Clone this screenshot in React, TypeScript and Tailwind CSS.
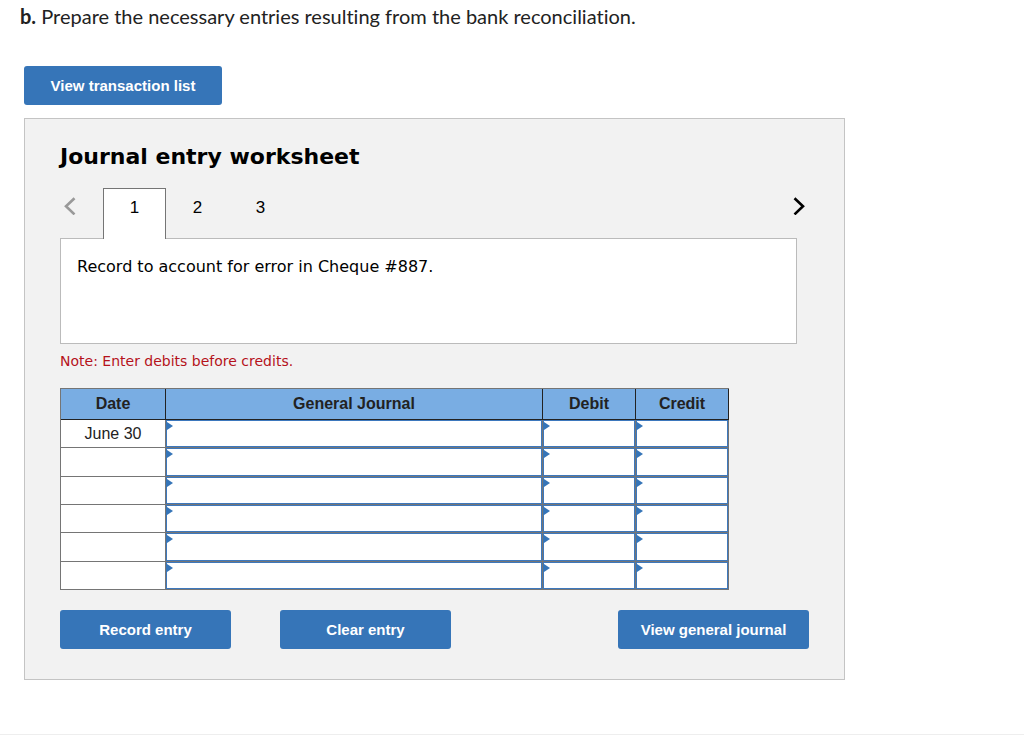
import { useState } from 'react';
import clsx from 'clsx';

const TABS = ['1', '2', '3'];
const ROWS = ['June 30', '', '', '', '', ''];
const COLUMNS = ['General Journal', 'Debit', 'Credit'];

interface ActionButtonProps {
  label: string;
  className?: string;
}

function ActionButton({ label, className }: ActionButtonProps) {
  return (
    <button
      type="button"
      className={clsx(
        'h-[39px] rounded-[3px] bg-[#3675b8] pt-px text-[15px] font-bold text-white hover:bg-[#2b639f]',
        className,
      )}
    >
      {label}
    </button>
  );
}

function Chevron({ flipped = false }: { flipped?: boolean }) {
  return (
    <svg width="12" height="18" viewBox="0 0 12 18" fill="none" stroke="currentColor" strokeWidth="2.6" aria-hidden>
      <path d={flipped ? 'M1.5 1.2 10 9.3 1.5 17.4' : 'M10.5 1.2 2 9.3l8.5 8.1'} />
    </svg>
  );
}

function EntryCell({ label }: { label: string }) {
  return (
    <td className="relative h-px border-r border-b border-[#757575] bg-white p-0">
      <input
        type="text"
        aria-label={label}
        className="block h-full w-full border border-[#3d78bd] px-2 text-base outline-none"
      />
      {/* corner marker of an editable cell */}
      <svg className="pointer-events-none absolute top-0.5 left-0" width="7" height="8" viewBox="0 0 7 8" aria-hidden>
        <path d="M0 0H1L7 4 1 8H0Z" fill="#3675b8" />
      </svg>
    </td>
  );
}

export default function App() {
  const [active, setActive] = useState('1');

  return (
    <main className="bg-white font-['Liberation_Sans',Arial,sans-serif] text-[#222]">
      <p className="px-5 pt-1 font-['Lato',sans-serif] text-[20px] leading-6 [font-variant-ligatures:none]">
        <b>b.</b> Prepare the necessary entries resulting from the bank reconciliation.
      </p>

      <div className="mt-[38px] max-w-[869px] px-6">
        <ActionButton label="View transaction list" className="w-[198px]" />

        <section className="mt-[13px] border border-[#c4c4c4] bg-[#f2f2f2] px-[35px] pt-6 pb-[30px]">
          <h2 className="font-['DejaVu_Sans',Verdana,sans-serif] text-[22px] leading-7 font-bold text-black">
            Journal entry worksheet
          </h2>

          <div className="relative -mb-px mt-[17px] flex h-[51px] items-start text-black">
            <button type="button" aria-label="Previous entry" className="mt-[9px] w-[43px] pl-1 text-[#999]">
              <Chevron />
            </button>
            {TABS.map((tab) => (
              <button
                key={tab}
                type="button"
                aria-pressed={active === tab}
                onClick={() => setActive(tab)}
                className={clsx(
                  'h-full w-[63px] border border-b-0 pb-3 text-[17px]',
                  active === tab ? 'border-[#757575] bg-white' : 'border-transparent',
                )}
              >
                {tab}
              </button>
            ))}
            <button type="button" aria-label="Next entry" className="mt-[9px] mr-1 ml-auto">
              <Chevron flipped />
            </button>
          </div>

          <div className="mr-3 min-h-[106px] border border-[#bbb] bg-white px-4 pt-4 font-['DejaVu_Sans',Verdana,sans-serif] text-[16px] leading-6 text-black">
            Record to account for error in Cheque #887.
          </div>

          <p className="mt-[7px] font-['DejaVu_Sans',Verdana,sans-serif] text-[14px] leading-5 text-[#b5121b]">
            Note: Enter debits before credits.
          </p>

          <table className="mt-[17px] h-[202px] w-full max-w-[669px] table-fixed border-separate border-spacing-0 border-t border-l border-[#757575] text-center text-base">
            <colgroup>
              <col className="w-[105px]" />
              <col />
              <col className="w-[93px]" />
              <col className="w-[93px]" />
            </colgroup>
            <thead>
              <tr className="h-[31px] bg-[#79ade3]">
                {['Date', ...COLUMNS].map((name) => (
                  <th key={name} scope="col" className="border-r border-b border-[#222] p-0 font-bold">
                    {name}
                  </th>
                ))}
              </tr>
            </thead>
            <tbody>
              {ROWS.map((date, i) => (
                <tr key={i} className="h-7">
                  <td className="border-r border-b border-[#757575] bg-white p-0">{date}</td>
                  {COLUMNS.map((name) => (
                    <EntryCell key={name} label={`${name}, line ${i + 1}`} />
                  ))}
                </tr>
              ))}
            </tbody>
          </table>

          <div className="mt-5 flex">
            <ActionButton label="Record entry" className="w-[171px]" />
            <ActionButton label="Clear entry" className="ml-[49px] w-[171px]" />
            <ActionButton label="View general journal" className="ml-auto w-[191px]" />
          </div>
        </section>
      </div>

      <hr className="mt-[54px] border-[#eee]" />
    </main>
  );
}
